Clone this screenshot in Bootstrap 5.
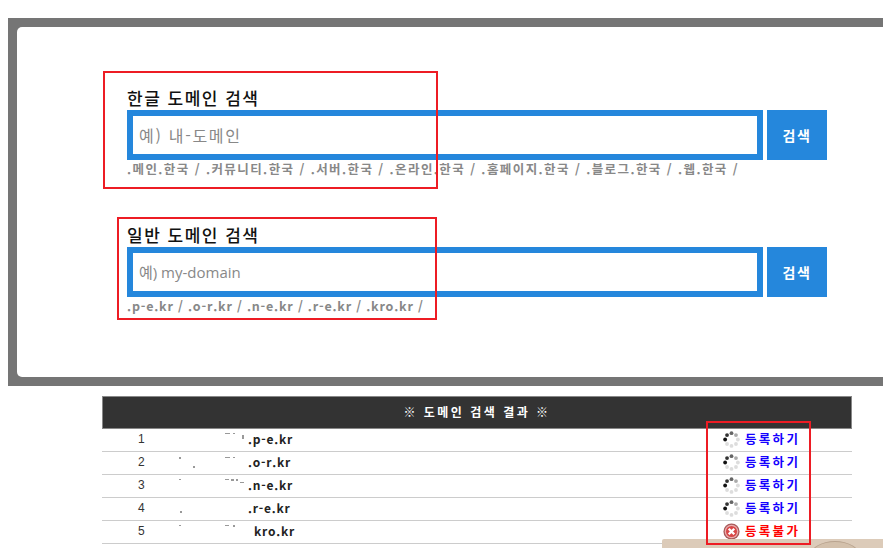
<!DOCTYPE html>
<html lang="ko">
<head>
<meta charset="utf-8">
<title>도메인 검색</title>
<link href="https://cdn.jsdelivr.net/npm/bootstrap@5.3.0/dist/css/bootstrap.min.css" rel="stylesheet">
<style>
html,body{height:548px;overflow:hidden;background:#fff;font-family:"Noto Sans CJK KR","Liberation Sans",sans-serif;}
.stage{width:883px;height:548px;position:relative;overflow:hidden;padding-top:18px;}
.frame{margin-left:8px;height:368px;background:#757575;padding:9px 0 9px 9px;}
.sheet{height:350px;background:#fff;border-radius:5px 0 0 5px;padding-left:110px;}
.block-a{padding-top:62px;height:170px;}
.block-b{padding-top:29px;}
.ttl{font-size:17px;line-height:17px;font-weight:500;color:#111;height:21px;letter-spacing:1.5px;}
.searchrow{gap:4px;width:700px;}
.fieldbox{width:636px;height:50px;border:6px solid #2587dc;display:flex;align-items:center;padding-left:6px;font-size:16px;color:#888;font-weight:400;}
.ph-ko{letter-spacing:1.7px;}
.ph-en{letter-spacing:0;font-family:"Open Sans","Noto Sans CJK KR",sans-serif;font-size:15px;}
.gobtn{width:60px;height:50px;background:#2587dc;color:#fff;border:0;font-size:14px;font-weight:700;border-radius:0;padding:0;letter-spacing:1.5px;}
.hint{font-size:12.5px;line-height:16px;font-weight:700;color:#888;margin-top:1px;letter-spacing:1.43px;}
.hint-en{letter-spacing:.8px;}
.result{position:absolute;left:102px;top:396px;width:750px;}
.reshead{height:33px;background:#333;border:1px solid #888;color:#fff;font-size:12px;font-weight:700;text-align:center;line-height:29px;letter-spacing:2.5px;}
.resrow{height:23px;border-bottom:1px solid #ccc;display:flex;align-items:center;font-size:12px;color:#222;padding-bottom:2px;}
.numcell{width:76px;padding-left:36px;font-size:12px;font-family:"Liberation Sans",sans-serif;color:#333;}
.namecell{width:545px;font-weight:700;letter-spacing:.8px;display:flex;align-items:center;}
.specks{width:70px;height:22px;flex:none;display:block;}
.specks-w{width:76px;}
.stat{font-weight:700;font-size:12.5px;letter-spacing:2.3px;display:flex;align-items:center;gap:5px;}
.okc{color:#1400ff;}.noc{color:#f00;}
.spin{width:17px;height:17px;flex:none;display:block;}
.redbox{position:absolute;border:2px solid #ed1c24;pointer-events:none;}
.rb1{left:103px;top:71px;width:335px;height:118px;}
.rb2{left:117px;top:217px;width:320px;height:103px;}
.rb3{left:706px;top:421px;width:105px;height:124px;}
.tan{position:absolute;left:662px;top:539px;width:221px;height:9px;background:#dccbb9;border-radius:2px 0 0 0;overflow:hidden;}
.tan i{position:absolute;left:148px;top:2px;width:50px;height:30px;border-radius:50%;border:1px solid #b9a48f;background:#d3c0ab;display:block;}
</style>
</head>
<body>
<div class="stage">
  <div class="frame">
    <div class="sheet">
      <div class="block-a">
        <div class="ttl">한글 도메인 검색</div>
        <div class="searchrow d-flex">
          <div class="fieldbox ph-ko">예) 내-도메인</div>
          <button class="btn gobtn" type="button">검색</button>
        </div>
        <div class="hint">.메인.한국 / .커뮤니티.한국 / .서버.한국 / .온라인.한국 / .홈페이지.한국 / .블로그.한국 / .웹.한국 /</div>
      </div>
      <div class="block-b">
        <div class="ttl">일반 도메인 검색</div>
        <div class="searchrow d-flex">
          <div class="fieldbox ph-en">예) my-domain</div>
          <button class="btn gobtn" type="button">검색</button>
        </div>
        <div class="hint hint-en">.p-e.kr / .o-r.kr / .n-e.kr / .r-e.kr / .kro.kr /</div>
      </div>
    </div>
  </div>

  <div class="result">
    <div class="reshead">※ 도메인 검색 결과 ※</div>
    <div class="resrow"><div class="numcell">1</div><div class="namecell"><svg class="specks" viewBox="0 0 70 22" fill="#999"><rect x="47" y="5" width="5" height="1"/><rect x="55" y="5" width="2" height="1"/><rect x="64" y="7" width="2" height="4"/></svg>.p-e.kr</div><div class="stat okc"><svg class="spin" viewBox="0 0 16 16"><circle cx="8" cy="2" r="1.8" fill="#666"/><circle cx="12.2" cy="3.8" r="1.8" fill="#aaa"/><circle cx="14" cy="8" r="1.8" fill="#ddd"/><circle cx="12.2" cy="12.2" r="1.8" fill="#ddd"/><circle cx="8" cy="14" r="1.8" fill="#ddd"/><circle cx="3.8" cy="12.2" r="1.8" fill="#ddd"/><circle cx="2" cy="8" r="1.8" fill="#111"/><circle cx="3.8" cy="3.8" r="1.8" fill="#333"/></svg>등록하기</div></div>
    <div class="resrow"><div class="numcell">2</div><div class="namecell"><svg class="specks" viewBox="0 0 70 22" fill="#999"><rect x="1" y="6" width="2" height="2"/><rect x="15" y="15" width="2" height="2"/><rect x="47" y="6" width="5" height="1"/><rect x="55" y="6" width="2" height="1"/></svg>.o-r.kr</div><div class="stat okc"><svg class="spin" viewBox="0 0 16 16"><circle cx="8" cy="2" r="1.8" fill="#666"/><circle cx="12.2" cy="3.8" r="1.8" fill="#aaa"/><circle cx="14" cy="8" r="1.8" fill="#ddd"/><circle cx="12.2" cy="12.2" r="1.8" fill="#ddd"/><circle cx="8" cy="14" r="1.8" fill="#ddd"/><circle cx="3.8" cy="12.2" r="1.8" fill="#ddd"/><circle cx="2" cy="8" r="1.8" fill="#111"/><circle cx="3.8" cy="3.8" r="1.8" fill="#333"/></svg>등록하기</div></div>
    <div class="resrow"><div class="numcell">3</div><div class="namecell"><svg class="specks" viewBox="0 0 70 22" fill="#999"><rect x="1" y="5" width="2" height="1"/><rect x="47" y="5" width="4" height="1"/><rect x="53" y="5" width="3" height="2"/><rect x="58" y="5" width="2" height="2"/><rect x="62" y="8" width="4" height="1"/></svg>.n-e.kr</div><div class="stat okc"><svg class="spin" viewBox="0 0 16 16"><circle cx="8" cy="2" r="1.8" fill="#666"/><circle cx="12.2" cy="3.8" r="1.8" fill="#aaa"/><circle cx="14" cy="8" r="1.8" fill="#ddd"/><circle cx="12.2" cy="12.2" r="1.8" fill="#ddd"/><circle cx="8" cy="14" r="1.8" fill="#ddd"/><circle cx="3.8" cy="12.2" r="1.8" fill="#ddd"/><circle cx="2" cy="8" r="1.8" fill="#111"/><circle cx="3.8" cy="3.8" r="1.8" fill="#333"/></svg>등록하기</div></div>
    <div class="resrow"><div class="numcell">4</div><div class="namecell"><svg class="specks" viewBox="0 0 70 22" fill="#999"><rect x="2" y="14" width="2" height="2"/></svg>.r-e.kr</div><div class="stat okc"><svg class="spin" viewBox="0 0 16 16"><circle cx="8" cy="2" r="1.8" fill="#666"/><circle cx="12.2" cy="3.8" r="1.8" fill="#aaa"/><circle cx="14" cy="8" r="1.8" fill="#ddd"/><circle cx="12.2" cy="12.2" r="1.8" fill="#ddd"/><circle cx="8" cy="14" r="1.8" fill="#ddd"/><circle cx="3.8" cy="12.2" r="1.8" fill="#ddd"/><circle cx="2" cy="8" r="1.8" fill="#111"/><circle cx="3.8" cy="3.8" r="1.8" fill="#333"/></svg>등록하기</div></div>
    <div class="resrow"><div class="numcell">5</div><div class="namecell"><svg class="specks specks-w" viewBox="0 0 76 22" fill="#999"><rect x="1" y="5" width="2" height="1"/><rect x="47" y="5" width="4" height="1"/><rect x="55" y="5" width="2" height="2"/></svg>kro.kr</div><div class="stat noc"><svg class="spin" viewBox="0 0 16 16"><circle cx="8" cy="8" r="7.6" fill="#a85a5a"/><circle cx="8" cy="8" r="6.4" fill="#eab0b0"/><circle cx="8" cy="8" r="5.2" fill="#d84848"/><path d="M5.4 5.4l5.2 5.2M10.6 5.4l-5.2 5.2" stroke="#fff" stroke-width="2.2"/></svg>등록불가</div></div>
  </div>
  <div class="tan"><i></i></div>
  <div class="redbox rb1"></div>
  <div class="redbox rb2"></div>
  <div class="redbox rb3"></div>
</div>
<script src="https://cdn.jsdelivr.net/npm/bootstrap@5.3.0/dist/js/bootstrap.bundle.min.js"></script>
</body>
</html>
